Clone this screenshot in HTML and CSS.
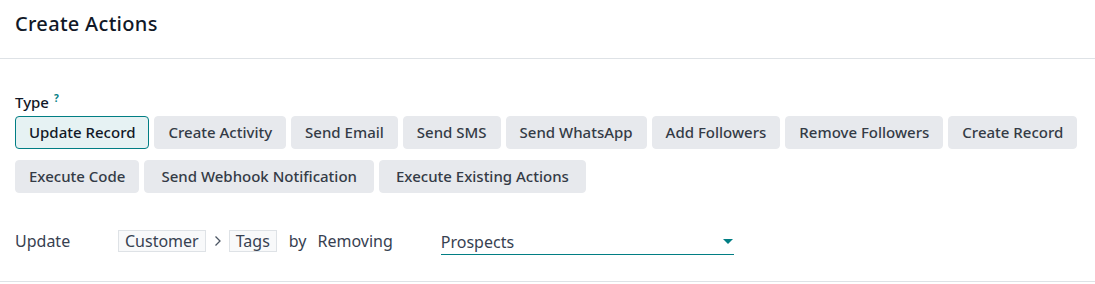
FILE: index.html
```html
<!DOCTYPE html>
<html>
<head>
<meta charset="utf-8">
<link rel="stylesheet" href="styles.css">
</head>
<body>
<div class="panel">
  <header class="head"><h1 class="title">Create Actions</h1></header>
  <section class="body">
    <div class="label">Type <sup class="help">?</sup></div>
    <div class="types">
      <button class="btn active">Update Record</button>
      <button class="btn">Create Activity</button>
      <button class="btn">Send Email</button>
      <button class="btn">Send SMS</button>
      <button class="btn">Send WhatsApp</button>
      <button class="btn">Add Followers</button>
      <button class="btn">Remove Followers</button>
      <button class="btn">Create Record</button>
      <button class="btn">Execute Code</button>
      <button class="btn wide">Send Webhook Notification</button>
      <button class="btn wide">Execute Existing Actions</button>
    </div>
    <div class="update">
      <span class="ulabel">Update</span>
      <span class="path">
        <span class="chip">Customer</span>
        <svg class="sep" width="8" height="12" viewBox="0 0 8 12"><path d="M1.5 1.5 L6 6 L1.5 10.5" fill="none" stroke="#4b5563" stroke-width="1.3"/></svg>
        <span class="chip">Tags</span>
      </span>
      <span class="word by">by</span>
      <span class="word">Removing</span>
      <span class="select">
        <span class="value">Prospects</span>
        <span class="caret"></span>
      </span>
    </div>
  </section>
</div>
</body>
</html>
```
FILE: styles.css
```css
html, body { margin: 0; padding: 0; background: #fff; }
body { font-family: "Noto Sans", "Open Sans", sans-serif; color: #374151; }
.panel { width: 1095px; }
.head { height: 59px; border-bottom: 1px solid #dee2e6; box-sizing: border-box; padding: 0 15px; display: flex; align-items: center; }
.title { margin: 0; font-size: 20px; font-weight: 500; color: #111827; line-height: 1; position: relative; top: -5px; letter-spacing: 0.3px; }
.body { padding: 33px 15px 0; border-bottom: 1px solid #dee2e6; height: 223px; box-sizing: border-box; }
.label { font-size: 15px; font-weight: 500; color: #111827; line-height: 20px; height: 21px; }
.help { color: #017e84; font-size: 10px; font-weight: 700; vertical-align: top; position: relative; top: -4px; margin-left: 1px; }
.types { display: flex; flex-wrap: wrap; gap: 11px 5px; margin-top: 3px; width: 1072px; }
.btn { font-family: inherit; font-size: 15px; font-weight: 500; color: #343b46; background: #e7e9ed; border: 1px solid #e7e9ed; border-radius: 4px; height: 33px; padding: 0 13px; margin: 0; line-height: 1; }
.btn.wide { padding: 0 16px; }
.btn.active { background: #e6f2f3; border-color: #017e84; color: #111827; }
.update { display: flex; align-items: center; margin-top: 35px; font-size: 16px; height: 26px; }
.ulabel { width: 103px; }
.path { display: flex; align-items: center; }
.chip { background: #f8f9fa; border: 1px solid #dee2e6; padding: 0 6px; line-height: 20px; }
.sep { margin: 0 7px 0 8px; }
.word { margin-left: 11px; }
.word.by { margin-left: 12px; }
.select { margin-left: 48px; width: 293px; border-bottom: 1px solid #017e84; display: flex; align-items: center; justify-content: space-between; height: 28px; box-sizing: border-box; padding-top: 2px; }
.caret { width: 0; height: 0; border-left: 5px solid transparent; border-right: 5px solid transparent; border-top: 5px solid #017e84; margin-right: 1px; }
```
